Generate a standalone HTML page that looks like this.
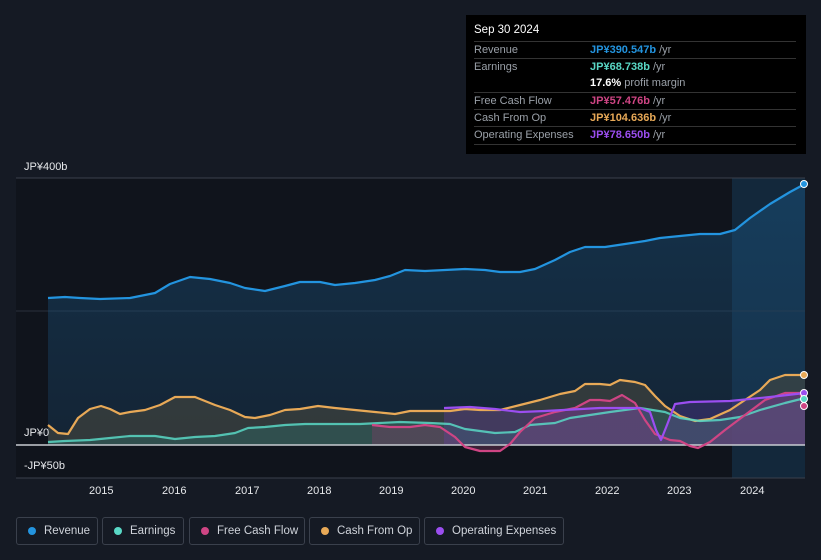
<!DOCTYPE html><html><head><style>
body{margin:0;width:821px;height:560px;background:#151a24;font-family:"Liberation Sans",sans-serif;overflow:hidden;position:relative}
.tt{position:absolute;left:466px;top:15px;width:340px;height:139px;background:#000;color:#fff;font-size:11px}
.tt .h{position:absolute;left:8px;top:9px;font-size:11.5px}
.row{position:absolute;left:8px;width:322px;border-top:1px solid #333;height:17px;line-height:17px}
.row span.l{color:#9aa0a8}
.row span.v{position:absolute;left:116px}
.g{color:#9aa0a8}
.leg{position:absolute;top:517px;height:28px;border:1px solid #3a404c;border-radius:3px;color:#cfd3da;font-size:11.5px;line-height:27px;box-sizing:border-box;padding-left:27px}
.leg i{position:absolute;left:11px;top:9px;width:8px;height:8px;border-radius:50%}
.ax{position:absolute;color:#e6e8eb;font-size:11px}
</style></head><body>
<svg width="821" height="560" style="position:absolute;left:0;top:0">
<defs><linearGradient id="rv" x1="0" y1="0" x2="0" y2="1"><stop offset="0" stop-color="#1a5785" stop-opacity=".45"/><stop offset="1" stop-color="#1c4a70" stop-opacity=".3"/></linearGradient></defs>
<rect x="16" y="178" width="716" height="300" fill="#10141c"/>
<rect x="732" y="178" width="73" height="300" fill="#13283b"/>
<line x1="16" y1="178" x2="805" y2="178" stroke="#3a404c"/>
<line x1="16" y1="311" x2="805" y2="311" stroke="#2a303b"/>
<line x1="16" y1="478" x2="805" y2="478" stroke="#3a404c"/>
<path d="M48,298 L65,297 80,298 100,299 130,298 155,293 170,284 190,277 210,279 230,283 245,288 265,291 285,286 300,282 320,282 335,285 355,283 375,280 390,276 405,270 425,271 445,270 465,269 485,270 500,272 520,272 535,269 555,260 570,252 585,247 605,247 625,244 645,241 660,238 680,236 700,234 720,234 735,230 750,218 770,204 790,192 803,185 L805,185 805,445 48,445Z" fill="url(#rv)"/>
<path d="M48,425 L58,433 68,434 78,418 90,409 101,406 110,409 120,414 130,412 145,410 160,405 175,397 195,397 205,401 215,405 230,410 245,417 255,418 270,415 285,410 300,409 318,406 335,408 355,410 375,412 395,414 410,411 430,411 450,411 465,409 480,410 500,410 520,405 540,400 560,394 575,391 585,384 600,384 610,385 620,380 635,382 645,385 655,396 665,406 680,416 695,421 710,419 730,410 745,400 760,390 770,380 785,375 805,375 L805,445 48,445Z" fill="#4a4a40" fill-opacity=".55"/>
<path d="M48,442 L65,441 90,440 110,438 130,436 155,436 175,439 195,437 215,436 235,433 248,428 265,427 285,425 305,424 330,424 360,424 380,423 400,422 430,423 450,424 465,429 480,431 495,433 515,432 530,425 555,423 570,418 590,415 610,412 640,408 665,412 680,418 700,421 720,420 740,417 760,410 785,403 805,398 L805,445 48,445Z" fill="#2e6b66" fill-opacity=".45"/>
<path d="M372,425 L390,427 410,427 425,425 440,427 455,437 465,447 480,451 500,451 510,444 520,432 535,418 555,412 575,408 590,400 600,400 610,401 622,395 635,403 645,420 655,434 670,440 680,441 690,446 698,448 710,442 725,430 745,415 765,400 785,393 800,393 805,406 L805,445 372,445Z" fill="#8a3b6a" fill-opacity=".35"/>
<path d="M444,408 L470,407 495,409 520,412 545,411 600,408 640,408 650,412 656,430 661,440 667,425 675,404 690,402 730,401 770,397 805,393 L805,445 444,445Z" fill="#6a3fb0" fill-opacity=".3"/>
<line x1="16" y1="445" x2="805" y2="445" stroke="#c8ccd2" stroke-width="1.5"/>
<g fill="none" stroke-width="2.2" stroke-linejoin="round">
<path stroke="#2394df" d="M48,298 L65,297 80,298 100,299 130,298 155,293 170,284 190,277 210,279 230,283 245,288 265,291 285,286 300,282 320,282 335,285 355,283 375,280 390,276 405,270 425,271 445,270 465,269 485,270 500,272 520,272 535,269 555,260 570,252 585,247 605,247 625,244 645,241 660,238 680,236 700,234 720,234 735,230 750,218 770,204 790,192 803,185"/>
<path stroke="#e8a957" d="M48,425 L58,433 68,434 78,418 90,409 101,406 110,409 120,414 130,412 145,410 160,405 175,397 195,397 205,401 215,405 230,410 245,417 255,418 270,415 285,410 300,409 318,406 335,408 355,410 375,412 395,414 410,411 430,411 450,411 465,409 480,410 500,410 520,405 540,400 560,394 575,391 585,384 600,384 610,385 620,380 635,382 645,385 655,396 665,406 680,416 695,421 710,419 730,410 745,400 760,390 770,380 785,375 805,375"/>
<path stroke="#59d8c6" d="M48,442 L65,441 90,440 110,438 130,436 155,436 175,439 195,437 215,436 235,433 248,428 265,427 285,425 305,424 330,424 360,424 380,423 400,422 430,423 450,424 465,429 480,431 495,433 515,432 530,425 555,423 570,418 590,415 610,412 640,408 665,412 680,418 700,421 720,420 740,417 760,410 785,403 805,398" stroke-opacity=".85"/>
<path stroke="#cf4584" d="M372,425 L390,427 410,427 425,425 440,427 455,437 465,447 480,451 500,451 510,444 520,432 535,418 555,412 575,408 590,400 600,400 610,401 622,395 635,403 645,420 655,434 670,440 680,441 690,446 698,448 710,442 725,430 745,415 765,400 785,393 800,393 805,406"/>
<path stroke="#9b4ef0" d="M444,408 L470,407 495,409 520,412 545,411 600,408 640,408 650,412 656,430 661,440 667,425 675,404 690,402 730,401 770,397 805,393"/>
</g>
<circle cx="804" cy="184" r="3.5" fill="#2394df" stroke="#fff"/>
<circle cx="804" cy="375" r="3.5" fill="#e8a957" stroke="#fff"/>
<circle cx="804" cy="393" r="3.5" fill="#9b4ef0" stroke="#fff"/>
<circle cx="804" cy="399" r="3.5" fill="#59d8c6" stroke="#fff"/>
<circle cx="804" cy="406" r="3.5" fill="#cf4584" stroke="#fff"/>
</svg>
<div class="ax" style="left:24px;top:161px">JP¥400b</div>
<div class="ax" style="left:24px;top:427px">JP¥0</div>
<div class="ax" style="left:24px;top:460px">-JP¥50b</div>
<div class="ax" style="left:89px;top:485px">2015</div>
<div class="ax" style="left:162px;top:485px">2016</div>
<div class="ax" style="left:235px;top:485px">2017</div>
<div class="ax" style="left:307px;top:485px">2018</div>
<div class="ax" style="left:379px;top:485px">2019</div>
<div class="ax" style="left:451px;top:485px">2020</div>
<div class="ax" style="left:523px;top:485px">2021</div>
<div class="ax" style="left:595px;top:485px">2022</div>
<div class="ax" style="left:667px;top:485px">2023</div>
<div class="ax" style="left:740px;top:485px">2024</div>
<div class="tt">
<div class="h">Sep 30 2024</div>
<div class="row" style="top:26px"><span class="l">Revenue</span><span class="v"><b style="color:#2394df">JP¥390.547b</b> <span class="g">/yr</span></span></div>
<div class="row" style="top:43px"><span class="l">Earnings</span><span class="v"><b style="color:#59d8c6">JP¥68.738b</b> <span class="g">/yr</span></span></div>
<div class="row" style="top:60px;border-top:none"><span class="v"><b>17.6%</b> <span class="g">profit margin</span></span></div>
<div class="row" style="top:77px"><span class="l">Free Cash Flow</span><span class="v"><b style="color:#cf4584">JP¥57.476b</b> <span class="g">/yr</span></span></div>
<div class="row" style="top:94px"><span class="l">Cash From Op</span><span class="v"><b style="color:#e8a957">JP¥104.636b</b> <span class="g">/yr</span></span></div>
<div class="row" style="top:111px"><span class="l">Operating Expenses</span><span class="v"><b style="color:#9b4ef0">JP¥78.650b</b> <span class="g">/yr</span></span></div>
<div class="row" style="top:129px;height:0"></div>
</div>
<div class="leg" style="left:16px;width:82px"><i style="background:#2394df"></i>Revenue</div>
<div class="leg" style="left:102px;width:82px"><i style="background:#59d8c6"></i>Earnings</div>
<div class="leg" style="left:189px;width:116px"><i style="background:#cf4584"></i>Free Cash Flow</div>
<div class="leg" style="left:309px;width:111px"><i style="background:#e8a957"></i>Cash From Op</div>
<div class="leg" style="left:424px;width:140px"><i style="background:#9b4ef0"></i>Operating Expenses</div>
</body></html>
